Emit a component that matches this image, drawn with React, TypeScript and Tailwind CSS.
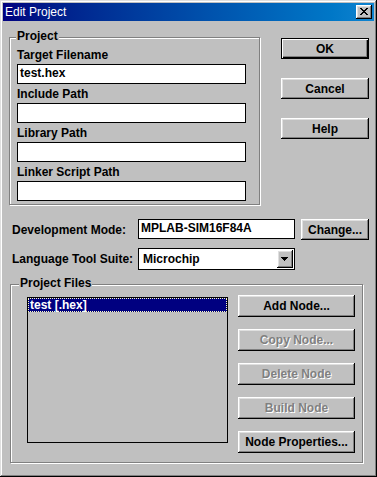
import type { ReactNode } from "react";

const raised =
  "shadow-[inset_-1px_-1px_0_#000,inset_1px_1px_0_#fff,inset_-2px_-2px_0_#808080,inset_2px_2px_0_#dfdfdf]";
const raisedDefault =
  "border border-black shadow-[inset_1px_1px_0_#fff,inset_-1px_-1px_0_#000,inset_-2px_-2px_0_#808080]";

function Button({
  label,
  className = "",
  disabled = false,
  isDefault = false,
}: {
  label: string;
  className?: string;
  disabled?: boolean;
  isDefault?: boolean;
}) {
  return (
    <div
      className={`flex items-center justify-center bg-[#c0c0c0] ${isDefault ? raisedDefault : raised} ${className}`}
    >
      <span
        className={
          disabled
            ? "text-[#808080] [text-shadow:1px_1px_0_#fff]"
            : "text-black"
        }
      >
        {label}
      </span>
    </div>
  );
}

function Field({ value = "", className = "" }: { value?: string; className?: string }) {
  return (
    <div
      className={`h-[20px] border border-black bg-white pl-[2px] leading-[17px] ${className}`}
    >
      {value}
    </div>
  );
}

function Group({
  title,
  labelClass,
  className,
  children,
}: {
  title: string;
  labelClass: string;
  className: string;
  children: ReactNode;
}) {
  return (
    <div
      className={`relative border border-[#808080] shadow-[inset_1px_1px_0_#fff,1px_1px_0_#fff] ${className}`}
    >
      <span
        className={`absolute top-[-9px] bg-[#c0c0c0] px-[1px] leading-[14px] ${labelClass}`}
      >
        {title}
      </span>
      {children}
    </div>
  );
}

function PathRow({ label, value, first }: { label: string; value?: string; first?: boolean }) {
  return (
    <div className={first ? "" : "mt-[3px]"}>
      <div className="h-[14px] leading-[14px]">{label}</div>
      <Field value={value} className="mt-[2px] w-[229px]" />
    </div>
  );
}

export default function App() {
  return (
    <div className="flex h-[477px] w-[377px] flex-col bg-[#c0c0c0] p-[3px] font-['Liberation_Sans',Arial,sans-serif] text-[12px] font-bold text-black shadow-[inset_-1px_-1px_0_#000,inset_1px_1px_0_#dfdfdf,inset_-2px_-2px_0_#808080,inset_2px_2px_0_#fff]">
      {/* title bar */}
      <div className="flex h-[18px] items-center justify-between bg-gradient-to-r from-[#000080] to-[#1084d0] px-[2px]">
        <span className="font-normal leading-[14px] text-white">Edit Project</span>
        <div className={`flex h-[14px] w-[16px] items-center justify-center bg-[#c0c0c0] ${raised}`}>
          <svg width="8" height="7" viewBox="0 0 8 7" shapeRendering="crispEdges" className="-mt-[1px] -ml-[1px]">
            <path
              d="M0 0h2v1H0zM6 0h2v1H6zM1 1h2v1H1zM5 1h2v1H5zM2 2h4v1H2zM3 3h2v1H3zM2 4h4v1H2zM1 5h2v1H1zM5 5h2v1H5zM0 6h2v1H0zM6 6h2v1H6z"
              fill="#000"
            />
          </svg>
        </div>
      </div>

      {/* project + main buttons */}
      <div className="flex items-start">
        <Group
          title="Project"
          labelClass="left-[6px]"
          className="ml-[6px] mt-[16px] h-[168px] w-[251px] pl-[7px] pt-[10px]"
        >
          <PathRow label="Target Filename" value="test.hex" first />
          <PathRow label="Include Path" />
          <PathRow label="Library Path" />
          <PathRow label="Linker Script Path" />
        </Group>
        <div className="ml-[21px] mt-[17px] flex w-[88px] flex-col gap-[19px]">
          <Button label="OK" isDefault className="h-[21px]" />
          <Button label="Cancel" className="h-[21px]" />
          <Button label="Help" className="h-[21px]" />
        </div>
      </div>

      {/* development mode */}
      <div className="mt-[14px] flex items-start">
        <div className="w-[135px] self-center pl-[9px] leading-[14px]">Development Mode:</div>
        <Field value="MPLAB-SIM16F84A" className="w-[157px]" />
        <Button label="Change..." className="ml-[6px] h-[21px] w-[68px]" />
      </div>

      {/* language tool suite */}
      <div className="mt-[8px] flex items-center">
        <div className="w-[135px] pl-[9px] leading-[14px]">Language Tool Suite:</div>
        <div className="flex h-[22px] w-[157px] items-center border border-black bg-white">
          <span className="flex-1 pl-[4px]">Microchip</span>
          <div className={`mr-[1px] flex h-[18px] w-[16px] items-center justify-center bg-[#c0c0c0] ${raised}`}>
            <svg width="7" height="4" viewBox="0 0 7 4" shapeRendering="crispEdges" className="-ml-[1px]">
              <path d="M0 0h7v1H0zM1 1h5v1H1zM2 2h3v1H2zM3 3h1v1H3z" fill="#000" />
            </svg>
          </div>
        </div>
      </div>

      {/* project files */}
      <Group
        title="Project Files"
        labelClass="left-[8px]"
        className="ml-[7px] mt-[14px] flex h-[179px] w-[353px] items-start pl-[16px] pt-[12px]"
      >
        <div className="h-[146px] w-[201px] border border-black bg-[#c0c0c0] p-[0px]">
          <div className="h-[14px] border border-dotted border-[#ffffc0] bg-[#000080] pl-[1px] leading-[12px] text-white">
            test [.hex]
          </div>
        </div>
        <div className="-mt-[2px] ml-[10px] flex w-[117px] flex-col gap-[12px]">
          <Button label="Add Node..." className="h-[22px]" />
          <Button label="Copy Node..." disabled className="h-[22px]" />
          <Button label="Delete Node" disabled className="h-[22px]" />
          <Button label="Build Node" disabled className="h-[22px]" />
          <Button label="Node Properties..." className="h-[22px]" />
        </div>
      </Group>
    </div>
  );
}
